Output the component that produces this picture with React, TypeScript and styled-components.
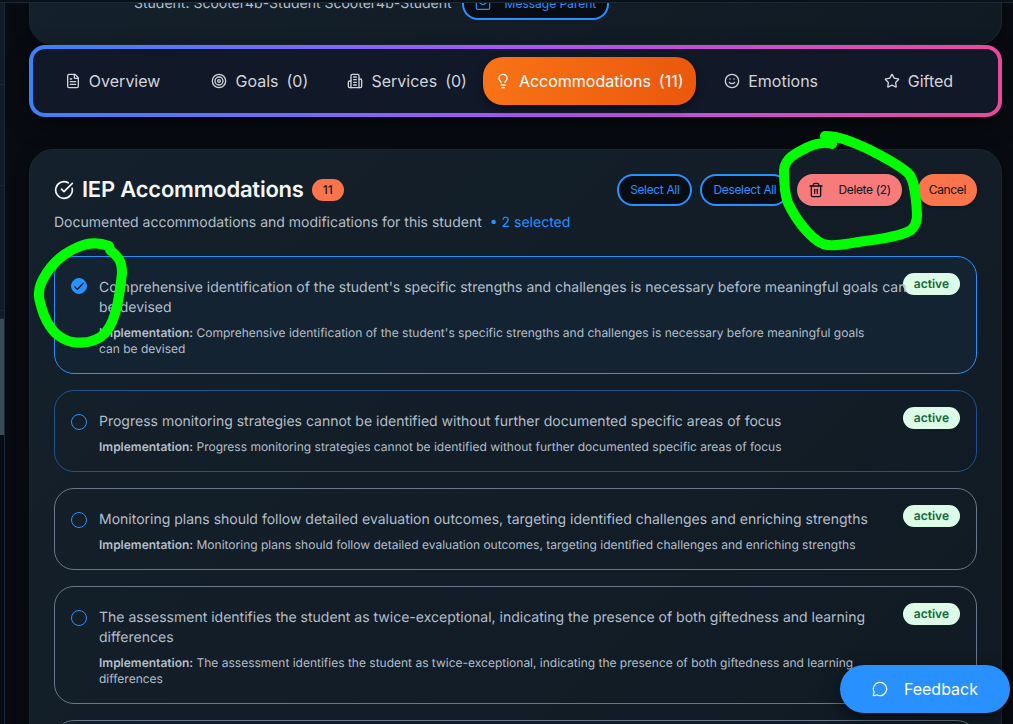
import React, { useState } from "react";
import styled, { createGlobalStyle, css } from "styled-components";
import {
  CircleCheckBig,
  FileText,
  Lightbulb,
  Mail,
  MessageCircle,
  Smile,
  Star,
  Target,
  Trash2,
} from "lucide-react";

const GlobalStyle = createGlobalStyle`
  *, *::before, *::after { box-sizing: border-box; }
  body {
    margin: 0;
    background: #080c12;
    color: #b3bfca;
    font-family: Inter, "Liberation Sans", sans-serif;
    font-size: 14px;
    line-height: 20px;
    text-rendering: geometricPrecision;
  }
  button, input { font: inherit; }
  h2, p, ul { margin: 0; padding: 0; }
`;

const Shell = styled.div`
  position: relative;
  display: grid;
  grid-template: 3px minmax(0, 1fr) / 5px minmax(0, 1fr);
  height: 100vh;
  overflow: hidden;
`;

const TopBar = styled.header`
  grid-column: 1 / -1;
  background: #0b1016;
  border-bottom: 1px solid #1a2937;
`;

const Rail = styled.aside`
  display: flex;
  flex-direction: column;
  border-right: 1px solid #16283a;
`;

const RailSection = styled.div<{ $h: number }>`
  height: ${(p) => p.$h}px;
  background: #111c26;
  border-bottom: 1px solid #16283a;
`;

const RailThumb = styled.div`
  height: 116px;
  background: #3c4a58;
`;

const Main = styled.main`
  display: flex;
  flex-direction: column;
  overflow: hidden;
  padding: 0 11px 0 24px;
`;

const panel = css`
  flex: none;
  background: linear-gradient(135deg, #14202b, #101a23);
  border: 1px solid #1a2733;
  border-radius: 24px;
  padding: 24px;
  box-shadow: 0 4px 16px rgba(0, 0, 0, 0.5);
`;

const StudentPanel = styled.section`
  ${panel}
  display: flex;
  align-items: center;
  gap: 10px;
  margin-top: -40px;
  padding-left: 104px;
`;

const TabBar = styled.nav`
  flex: none;
  display: flex;
  gap: 4px;
  margin: 0 0 32px;
  padding: 8px;
  border: 4px solid transparent;
  border-radius: 16px;
  background:
    linear-gradient(#111827, #111827) padding-box,
    linear-gradient(90deg, #3b82f6, #a855f7 50%, #ec4899) border-box;
  box-shadow: 0 8px 20px rgba(0, 0, 0, 0.6);
`;

const Tab = styled.button<{ $active: boolean }>`
  flex: 1;
  display: flex;
  align-items: center;
  justify-content: center;
  gap: 8px;
  height: 48px;
  padding: 0 12px;
  border: 0;
  border-radius: 20px;
  background: ${(p) => (p.$active ? "linear-gradient(90deg, #f97316, #ea580c)" : "transparent")};
  box-shadow: ${(p) => (p.$active ? "0 4px 8px rgba(0, 0, 0, 0.4)" : "none")};
  color: ${(p) => (p.$active ? "#ffffff" : "#d1d5db")};
  font-size: 16px;
  line-height: 24px;
  white-space: nowrap;
  svg { flex: none; }
`;

const Panel = styled.section`
  ${panel}
`;

const PanelHead = styled.div`
  display: flex;
  align-items: center;
  justify-content: space-between;
  gap: 16px;
`;

const Title = styled.h2`
  display: flex;
  align-items: center;
  gap: 8px;
  color: #f3f5f7;
  font-size: 22px;
  font-weight: 600;
  line-height: 32px;
  letter-spacing: -0.01em;
`;

const Count = styled.span`
  padding: 3px 11px;
  border-radius: 11px;
  background: #fb754c;
  color: #14181d;
  font-size: 12px;
  font-weight: 500;
  line-height: 16px;
  letter-spacing: 0;
`;

const Actions = styled.div`
  display: flex;
  gap: 16px;
  letter-spacing: -0.025em;
`;

const ActionGroup = styled.div`
  display: flex;
  gap: 8px;
`;

const Button = styled.button<{ $kind: "outline" | "danger" | "warm" }>`
  display: inline-flex;
  align-items: center;
  gap: 14px;
  height: 32px;
  padding: 0 11px;
  border: 2px solid #2990ff;
  border-radius: 16px;
  background: #080d14;
  color: #2990ff;
  font-size: 12px;
  line-height: 16px;
  white-space: nowrap;
  letter-spacing: inherit;
  ${(p) =>
    p.$kind !== "outline" &&
    css`
      border: 0;
      background: ${p.$kind === "danger" ? "#f87b7b" : "#fb754c"};
      color: #0c1117;
      box-shadow: 0 1px 3px rgba(0, 0, 0, 0.4);
    `}
`;

const Subtitle = styled.p`
  margin: 7px 0 23px;
`;

const Selected = styled.span`
  margin-left: 8px;
  color: #2990ff;
`;

const List = styled.ul`
  display: flex;
  flex-direction: column;
  gap: 16px;
  list-style: none;
`;

const tones = { selected: "#2990ff", hover: "#1f5390", plain: "#66788a" };

const Item = styled.li<{ $tone: keyof typeof tones }>`
  display: flex;
  align-items: flex-start;
  padding: 16px;
  border: 1px solid ${(p) => tones[p.$tone]};
  border-radius: 20px;
  background: ${(p) => (p.$tone === "selected" ? "#132332" : "transparent")};
`;

const EmptyItem = styled(Item)`
  height: 82px;
`;

const Check = styled.input`
  flex: none;
  appearance: none;
  width: 16px;
  height: 16px;
  margin: 7px 12px 0 0;
  border: 1px solid #2990ff;
  border-radius: 50%;
  &:checked {
    margin-top: 5px;
    background: #2990ff
      url("data:image/svg+xml,%3Csvg xmlns='http://www.w3.org/2000/svg' viewBox='0 0 14 14' fill='none' stroke='%230b1118' stroke-width='1.2'%3E%3Cpath d='M2.500 7.500l2.800 2.800L11.500 4'/%3E%3C/svg%3E");
  }
`;

const ItemText = styled.label`
  position: relative;
  z-index: 1;
  flex: 1;
  min-width: 0;
  margin-right: -8px;
  padding-top: 5px;
`;

const Detail = styled.span`
  display: block;
  margin-top: 7px;
  padding-right: 32px;
  font-size: 12px;
  line-height: 16px;
  b { font-weight: 600; }
`;

const Status = styled.span`
  flex: none;
  padding: 3px 11px;
  border-radius: 11px;
  background: #dcfce7;
  color: #166534;
  font-size: 12px;
  font-weight: 600;
  line-height: 16px;
`;

const Feedback = styled.button`
  position: absolute;
  z-index: 2;
  right: 3px;
  bottom: 11px;
  display: flex;
  align-items: center;
  gap: 16px;
  height: 48px;
  padding: 0 32px;
  border: 0;
  border-radius: 24px;
  background: #2990ff;
  color: #ffffff;
  font-size: 16px;
  box-shadow: 0 6px 16px rgba(0, 0, 0, 0.5);
`;

const Markup = styled.svg`
  position: absolute;
  z-index: 2;
  top: 0;
  pointer-events: none;
  fill: none;
  stroke: #00ff00;
  stroke-width: 10;
  stroke-linecap: round;
  stroke-linejoin: round;
`;
const MarkupLeft = styled(Markup)`
  left: 0;
`;
const MarkupRight = styled(Markup)`
  right: 0;
`;

function Building({ size = 16, strokeWidth = 2 }: { size?: number; strokeWidth?: number }) {
  return (
    <svg
      width={size}
      height={size}
      viewBox="0 0 24 24"
      fill="none"
      stroke="currentColor"
      strokeWidth={strokeWidth}
      strokeLinecap="round"
      strokeLinejoin="round"
      aria-hidden="true"
    >
      <path d="M6 22V4a2 2 0 0 1 2-2h8a2 2 0 0 1 2 2v18Z" />
      <path d="M6 12H4a2 2 0 0 0-2 2v6a2 2 0 0 0 2 2h2" />
      <path d="M18 9h2a2 2 0 0 1 2 2v9a2 2 0 0 1-2 2h-2" />
      <path d="M10 6h4M10 10h4M10 14h4M10 18h4" />
    </svg>
  );
}

const tabs = [
  { label: "Overview", icon: FileText },
  { label: "Goals", count: 0, icon: Target },
  { label: "Services", count: 0, icon: Building },
  { label: "Accommodations", count: 11, icon: Lightbulb },
  { label: "Emotions", icon: Smile },
  { label: "Gifted", icon: Star },
];

const items: { text: string; tone: keyof typeof tones }[] = [
  {
    text: "Comprehensive identification of the student's specific strengths and challenges is necessary before meaningful goals can be devised",
    tone: "selected",
  },
  {
    text: "Progress monitoring strategies cannot be identified without further documented specific areas of focus",
    tone: "hover",
  },
  {
    text: "Monitoring plans should follow detailed evaluation outcomes, targeting identified challenges and enriching strengths",
    tone: "plain",
  },
  {
    text: "The assessment identifies the student as twice-exceptional, indicating the presence of both giftedness and learning differences",
    tone: "plain",
  },
];

export default function App() {
  const [active, setActive] = useState("Accommodations");
  return (
    <Shell>
      <GlobalStyle />
      <TopBar />
      <Rail>
        <RailSection $h={82} />
        <RailSection $h={101} />
        <RailSection $h={125} />
        <RailSection $h={8} />
        <RailThumb />
      </Rail>
      <Main>
        <StudentPanel>
          <span>Student: Scooter4b-Student Scooter4b-Student</span>
          <Button $kind="outline">
            <Mail size={16} strokeWidth={1.75} />
            Message Parent
          </Button>
        </StudentPanel>
        <TabBar>
          {tabs.map(({ label, count, icon: Icon }) => (
            <Tab key={label} $active={label === active} onClick={() => setActive(label)}>
              <Icon size={16} strokeWidth={2} />
              <span>{label}</span>
              {count !== undefined && <span>({count})</span>}
            </Tab>
          ))}
        </TabBar>
        <Panel>
          <PanelHead>
            <Title>
              <CircleCheckBig size={20} />
              IEP Accommodations
              <Count>11</Count>
            </Title>
            <Actions>
              <ActionGroup>
                <Button $kind="outline">Select All</Button>
                <Button $kind="outline">Deselect All</Button>
                <Button $kind="danger">
                  <Trash2 size={16} strokeWidth={2} />
                  Delete (2)
                </Button>
              </ActionGroup>
              <Button $kind="warm">Cancel</Button>
            </Actions>
          </PanelHead>
          <Subtitle>
            Documented accommodations and modifications for this student
            <Selected>• 2 selected</Selected>
          </Subtitle>
          <List>
            {items.map(({ text, tone }, i) => (
              <Item key={text} $tone={tone}>
                <Check type="checkbox" id={`item-${i}`} defaultChecked={tone === "selected"} />
                <ItemText htmlFor={`item-${i}`}>
                  {text}
                  <Detail>
                    <b>Implementation:</b> {text}
                  </Detail>
                </ItemText>
                <Status>active</Status>
              </Item>
            ))}
            <EmptyItem $tone="plain" />
          </List>
        </Panel>
      </Main>
      <Feedback>
        <MessageCircle size={16} strokeWidth={1.75} />
        Feedback
      </Feedback>
      <MarkupLeft width="140" height="360" viewBox="0 0 140 360">
        <path d="M109 246C98 242 86 243 76 248C60 255 50 266 43 279C36 292 39 301 44 315C50 330 59 339 72 342C86 344 98 341 106 332C117 319 120 291 122 273C122 262 119 257 110 250" />
      </MarkupLeft>
      <MarkupRight width="253" height="260" viewBox="760 0 253 260">
        <path d="M832 144L825 136C840 136 855 143 868 149C884 157 901 166 909 174C914 181 915 190 916 201C917 213 919 223 911 230C900 237 874 240 858 242C846 244 831 247 823 244C811 239 796 220 788 203C784 193 784 180 784 170C785 158 796 153 808 147C817 142 825 143 831 143" />
      </MarkupRight>
    </Shell>
  );
}
